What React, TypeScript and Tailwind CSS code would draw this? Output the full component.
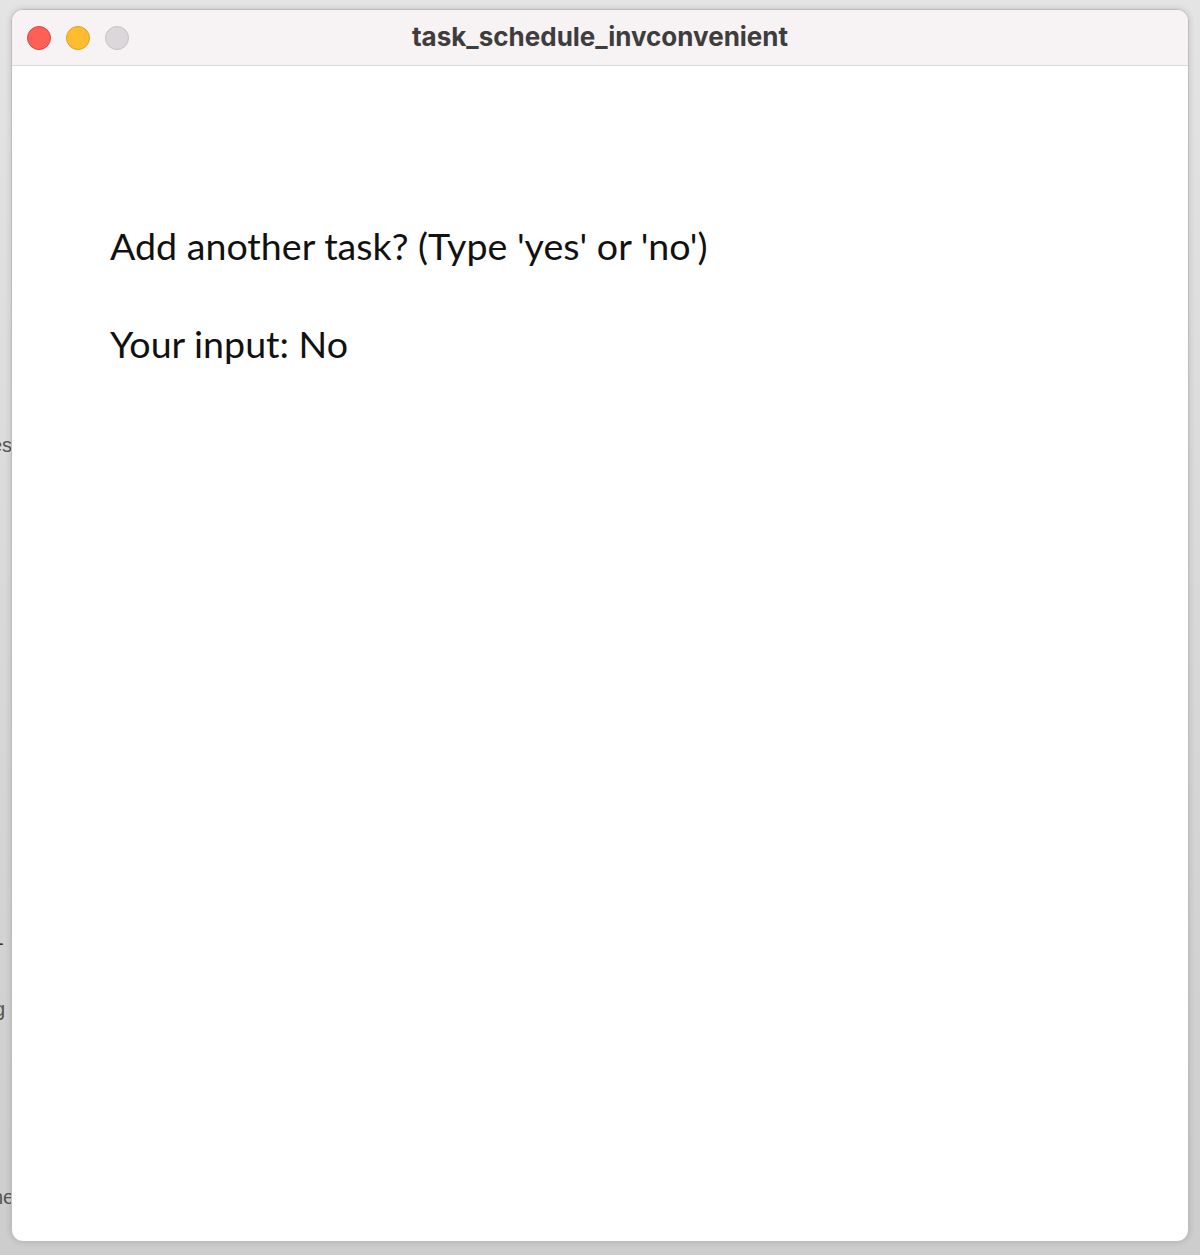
export default function App() {
  return (
    <div className="relative w-[1200px] h-[1255px] overflow-hidden bg-gradient-to-b from-[#e4e4e4] to-[#cdcdcd] pt-[9px] pl-[11px] pr-[11px] pb-[13px]">
      {/* bits of the window behind */}
      <span className="absolute left-[-9px] top-[430px] text-[20px] text-[#555] [font-family:'Liberation_Sans',sans-serif]">es</span>
      <span className="absolute left-[-3px] top-[928px] text-[20px] text-[#333] [font-family:'Liberation_Sans',sans-serif]">-</span>
      <span className="absolute left-[-6px] top-[994px] text-[20px] text-[#555] [font-family:'Liberation_Sans',sans-serif]">g</span>
      <span className="absolute left-[-8px] top-[1182px] text-[20px] text-[#555] [font-family:'Liberation_Sans',sans-serif]">ne</span>

      <div className="relative flex flex-col h-full rounded-[12px] overflow-hidden bg-white border border-[#bdbdbd] shadow-[0_0_6px_rgba(0,0,0,0.15)]">
        <div className="relative flex items-center h-[56px] shrink-0 bg-[#f7f2f4] border-b border-[#dedada] px-[15px]">
          <div className="flex gap-[15px]">
            <span className="w-[24px] h-[24px] rounded-full bg-[#fe5f57] border border-[#e0443e]" />
            <span className="w-[24px] h-[24px] rounded-full bg-[#febc2e] border border-[#dea123]" />
            <span className="w-[24px] h-[24px] rounded-full bg-[#dcd7da] border border-[#c6c2c4]" />
          </div>
          <div className="absolute inset-0 flex items-center justify-center pb-[2px] text-[26px] font-bold text-[#3d3d3d] [font-family:Inter,'Liberation_Sans',sans-serif]">
            task_schedule_invconvenient
          </div>
        </div>
        <div className="flex flex-col gap-[40px] pl-[98px] pt-[151px] text-[37.6px] leading-[58px] text-[#111] [font-family:Lato,'Noto_Sans',sans-serif]">
          <p>Add another task? (Type 'yes' or 'no')</p>
          <p>Your input: No</p>
        </div>
      </div>
    </div>
  );
}
